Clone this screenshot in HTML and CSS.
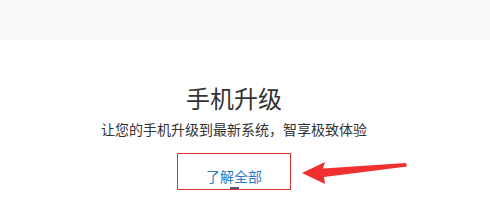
FILE: index.html
```html
<!DOCTYPE html>
<html lang="zh-CN">
<head>
<meta charset="utf-8">
<title>手机升级</title>
<link rel="stylesheet" href="styles.css">
</head>
<body>
<div class="topbar"></div>
<section class="upgrade">
  <h1 class="title">手机升级</h1>
  <p class="subtitle">让您的手机升级到最新系统，智享极致体验</p>
  <div class="more-box">
    <span class="more">了解全部</span>
    <span class="more-mark"></span>
  </div>
</section>
<svg class="arrow" width="490" height="211" viewBox="0 0 490 211">
  <polygon points="302,173 325,162 323,168.5 406,163 407,166.5 324,177 325,184" fill="#f0302e"/>
</svg>
</body>
</html>
```
FILE: styles.css
```css
html, body {
  margin: 0;
  padding: 0;
  background: #ffffff;
}
body {
  width: 490px;
  height: 211px;
  overflow: hidden;
  font-family: "Microsoft YaHei", "Noto Sans CJK SC", "Noto Sans", sans-serif;
  color: #333333;
  position: relative;
}
.topbar {
  height: 40px;
  background: #f9f9f9;
}
.upgrade {
  display: flex;
  flex-direction: column;
  align-items: center;
  padding-right: 22px;
  padding-top: 40px;
}
.title {
  margin: 0;
  font-size: 24px;
  line-height: 36px;
  font-weight: normal;
  color: #333333;
}
.subtitle {
  margin: 0;
  margin-top: 3px;
  font-size: 14px;
  line-height: 20px;
  color: #333333;
}
.more-box {
  position: relative;
  margin-top: 14px;
  display: flex;
  align-items: center;
  justify-content: center;
  box-sizing: border-box;
  width: 114px;
  height: 37px;
  padding-top: 9px;
  border: 1px solid #e03434;
}
.more {
  font-size: 14px;
  color: #2f7cc4;
}
.more-mark {
  position: absolute;
  left: 52px;
  bottom: 0;
  width: 9px;
  height: 2px;
  background: #4a5a78;
}
.arrow {
  position: absolute;
  left: 0;
  top: 0;
}
```
